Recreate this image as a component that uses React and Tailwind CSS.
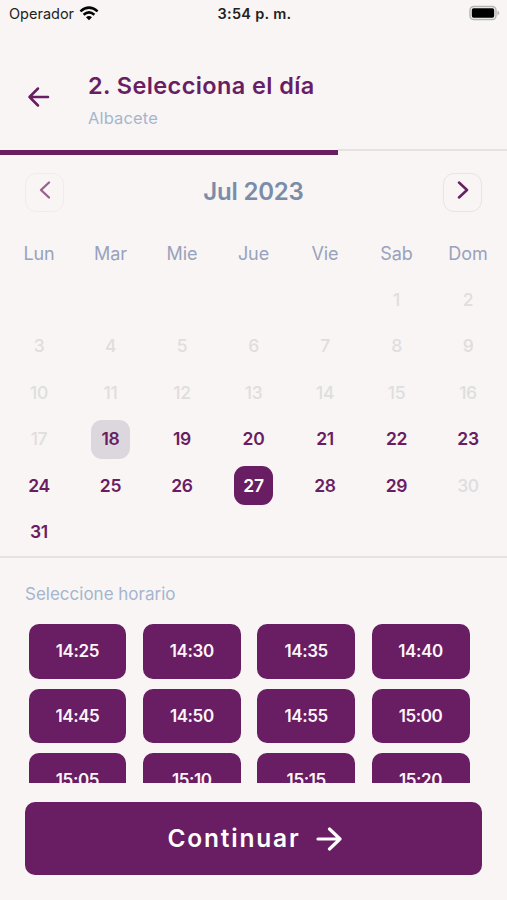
const WEEKDAYS = ['Lun', 'Mar', 'Mie', 'Jue', 'Vie', 'Sab', 'Dom'];
const DAYS = [null, null, null, null, null, ...Array.from({ length: 31 }, (_, i) => i + 1)];
const TIMES = ['14:25', '14:30', '14:35', '14:40', '14:45', '14:50', '14:55', '15:00', '15:05', '15:10', '15:15', '15:20'];

function dayClass(day) {
  if (day === 18) return 'bg-[#dcd7dc] text-[#691d62]';
  if (day === 27) return 'bg-[#691d62] text-white';
  if (day < 18 || day === 30) return 'font-medium text-[#e0dddf]';
  return 'text-[#691d62]';
}

function StatusBar() {
  return (
    <div className="grid h-7 grid-cols-3 items-center pl-[9px] pr-[7px] text-[14.5px] text-[#222]">
      <div className="flex items-center gap-[5px]">
        <span className="tracking-[0px]">Operador</span>
        <svg width="20" height="15" viewBox="0 0 20 15" className="-mt-[2px]" fill="none" stroke="#050505" strokeWidth="2.5">
          <path d="M1.4 5.4 Q10 -2.2 18.6 5.4" />
          <path d="M4.6 8.7 Q10 4 15.4 8.7" />
          <path d="M7 11.2 Q10 8.8 13 11.2 L10 14.3 Z" fill="#050505" stroke="none" />
        </svg>
      </div>
      <span className="whitespace-nowrap text-center text-[14.5px] font-semibold tracking-[0.3px]">3:54 p. m.</span>
      <svg width="31" height="16" viewBox="0 0 31 16" className="-mt-[2px] justify-self-end">
        <rect x="1" y="1.5" width="26" height="13" rx="3.8" fill="#f8f5f4" stroke="#b5b3b3" strokeWidth="1.4" />
        <rect x="2.8" y="3.3" width="22.4" height="9.4" rx="1.8" fill="#000" />
        <path d="M28.5 5.5 Q32.3 8 28.5 10.5 Z" fill="#b5b3b3" />
      </svg>
    </div>
  );
}

function Header() {
  return (
    <header className="flex h-[122px] items-start pl-[27px]">
      <svg width="23" height="22" viewBox="0 0 23 22" className="mt-[58px]" fill="none" stroke="#691d62" strokeWidth="2.5" strokeLinecap="round" strokeLinejoin="round">
        <path d="M21 11H2.5M11 2.5L2.5 11L11 19.5" />
      </svg>
      <div className="ml-[38px] mt-[42px]">
        <h1 className="text-[23.5px] font-semibold leading-[32px] tracking-[0.4px] text-[#691d62]">2. Selecciona el día</h1>
        <p className="mt-[6px] text-[16.5px] leading-[20px] tracking-[0.15px] text-[#a5b5cf]">Albacete</p>
      </div>
    </header>
  );
}

function MonthBar() {
  return (
    <div className="flex h-[39px] items-center justify-between px-[25px]">
      <button className="flex size-[39px] items-center justify-center rounded-[11px] border border-[#f0ecec]">
        <svg width="12" height="18" viewBox="0 0 12 18" className="-mt-[5px]" fill="none" stroke="#98608f" strokeWidth="2.3" strokeLinecap="round" strokeLinejoin="round">
          <path d="M10 1.5L2 9L10 16.5" />
        </svg>
      </button>
      <h2 className="-mt-[1px] text-[24px] font-semibold tracking-[-0.2px] text-[#7a8ca9]">Jul 2023</h2>
      <button className="flex size-[39px] items-center justify-center rounded-[11px] border-[1.5px] border-[#e9e3e5]">
        <svg width="12" height="18" viewBox="0 0 12 18" className="-mt-[5px]" fill="none" stroke="#691d62" strokeWidth="2.5" strokeLinecap="round" strokeLinejoin="round">
          <path d="M2 1.5L10 9L2 16.5" />
        </svg>
      </button>
    </div>
  );
}

export default function App() {
  return (
    <main className="flex h-[900px] w-[507px] flex-col overflow-hidden bg-[#f8f5f4] font-['Inter','Noto_Sans',sans-serif]">
      <StatusBar />
      <Header />
      <div className="h-[5px] w-[338px] shrink-0 bg-[#691d62]" />
      <div className="-mt-[6px] ml-[338px] h-[2px] shrink-0 bg-[#e5e2e3]" />
      <div className="h-[22px] shrink-0" />
      <MonthBar />

      <section className="mt-[30px] grid shrink-0 grid-cols-7 px-[3.25px] text-center text-[18px] leading-6 tracking-[-0.1px] text-[#99a2bc]">
        {WEEKDAYS.map((w) => <span key={w}>{w}</span>)}
      </section>
      <section className="mt-[11px] grid shrink-0 auto-rows-[46.4px] grid-cols-7 place-items-center px-[3.25px] text-[17.5px] font-semibold tracking-[-0.3px]">
        {DAYS.map((d, i) => d
          ? <span key={i} className={`flex size-[39px] items-center justify-center rounded-[11px] ${dayClass(d)}`}>{d}</span>
          : <span key={i} />)}
      </section>

      <section className="mt-[0.6px] h-[227px] shrink-0 overflow-hidden border-t-2 border-[#e5e2e3]">
        <p className="ml-[25px] mt-[24px] text-[17px] leading-6 tracking-[0px] text-[#a5b5cf]">Seleccione horario</p>
        <div className="ml-[28.5px] mt-[18px] grid w-[441px] grid-cols-4 gap-x-[16.5px] gap-y-[10px]">
          {TIMES.map((t) => (
            <button key={t} className="h-[54.7px] rounded-[10px] bg-[#691d62] pt-px text-[17px] font-semibold tracking-[-0.4px] text-[#fcf5fa]">{t}</button>
          ))}
        </div>
      </section>

      <button className="mx-[25px] mt-[19px] flex h-[73px] shrink-0 items-center justify-center gap-[15px] rounded-[10px] bg-[#691d62] pl-[2px] text-[24.5px] font-semibold tracking-[1.8px] text-white">
        <span>Continuar</span>
        <svg width="26" height="24" viewBox="0 0 26 24" className="mt-[2px]" fill="none" stroke="currentColor" strokeWidth="3.2" strokeLinecap="round" strokeLinejoin="round">
          <path d="M2 12H24M13.5 2L24 12L13.5 22" />
        </svg>
      </button>
    </main>
  );
}
